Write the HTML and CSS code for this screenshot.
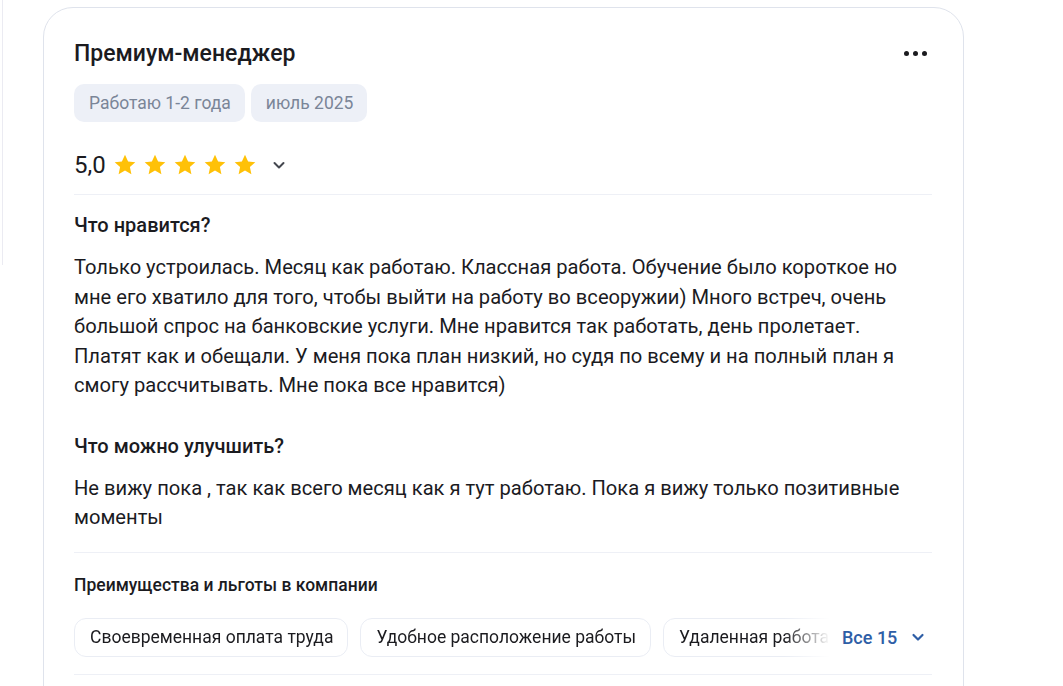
FILE: index.html
```html
<!DOCTYPE html>
<html lang="ru">
	<head>
		<meta charset="UTF-8">
		<title>Отзыв: Премиум-менеджер</title>
		<link rel="stylesheet" href="styles.css">
	</head>
	<body>
		<div class="page">
			<div class="side-strip"></div>

			<div class="review">
				<div class="review-head">
					<h2 class="review-title">Премиум-менеджер</h2>
					<button type="button" class="more" aria-label="Ещё">
						<span></span><span></span><span></span>
					</button>
				</div>

				<div class="tags">
					<span class="tag">Работаю 1-2 года</span>
					<span class="tag">июль 2025</span>
				</div>

				<div class="rating">
					<span class="rating-value">5,0</span>
					<span class="stars">
						<svg viewBox="0 0 24 24"><path d="M12 1.8l3.1 6.6 7.2.8-5.4 4.9 1.5 7.1L12 17.6l-6.4 3.6 1.5-7.1-5.4-4.9 7.2-.8z"/></svg>
						<svg viewBox="0 0 24 24"><path d="M12 1.8l3.1 6.6 7.2.8-5.4 4.9 1.5 7.1L12 17.6l-6.4 3.6 1.5-7.1-5.4-4.9 7.2-.8z"/></svg>
						<svg viewBox="0 0 24 24"><path d="M12 1.8l3.1 6.6 7.2.8-5.4 4.9 1.5 7.1L12 17.6l-6.4 3.6 1.5-7.1-5.4-4.9 7.2-.8z"/></svg>
						<svg viewBox="0 0 24 24"><path d="M12 1.8l3.1 6.6 7.2.8-5.4 4.9 1.5 7.1L12 17.6l-6.4 3.6 1.5-7.1-5.4-4.9 7.2-.8z"/></svg>
						<svg viewBox="0 0 24 24"><path d="M12 1.8l3.1 6.6 7.2.8-5.4 4.9 1.5 7.1L12 17.6l-6.4 3.6 1.5-7.1-5.4-4.9 7.2-.8z"/></svg>
					</span>
					<svg class="chevron" viewBox="0 0 16 16"><path d="M3.5 6l4.5 4.5L12.5 6"/></svg>
				</div>

				<hr class="divider">

				<h3 class="section-title">Что нравится?</h3>
				<p class="section-text">Только устроилась. Месяц как работаю. Классная работа. Обучение было короткое но мне его хватило для того, чтобы выйти на работу во всеоружии) Много встреч, очень большой спрос на банковские услуги. Мне нравится так работать, день пролетает. Платят как и обещали. У меня пока план низкий, но судя по всему и на полный план я смогу рассчитывать. Мне пока все нравится)</p>

				<h3 class="section-title second">Что можно улучшить?</h3>
				<p class="section-text">Не вижу пока , так как всего месяц как я тут работаю. Пока я вижу только позитивные моменты</p>

				<hr class="divider lower">

				<h4 class="benefits-title">Преимущества и льготы в компании</h4>
				<div class="benefits">
					<div class="chips">
						<span class="chip">Своевременная оплата труда</span>
						<span class="chip">Удобное расположение работы</span>
						<span class="chip">Удаленная работа</span>
					</div>
					<button type="button" class="show-all">
						Все 15
						<svg viewBox="0 0 16 16"><path d="M3.5 6l4.5 4.5L12.5 6"/></svg>
					</button>
				</div>

				<hr class="divider bottom">
			</div>
		</div>
	</body>
</html>
```

FILE: styles.css
```css
html, body {
	margin : 0;
	padding : 0;
	background-color : #ffffff;
	font-family : Roboto, "Noto Sans", Arial, sans-serif;
	color : #1b1b1f;
}
.page {
	display : flex;
	align-items : flex-start;
	height : 686px;
	overflow : hidden;
}
.side-strip {
	width : 2px;
	height : 265px;
	border-right : 1px solid #ebebf2;
	flex-shrink : 0;
}
.review {
	margin : 7px 0 0 40px;
	width : 858px;
	padding : 31px 31px 40px 30px;
	border : 1px solid #dfe3ec;
	border-radius : 30px;
	flex-shrink : 0;
}
.review-head {
	display : flex;
	justify-content : space-between;
	align-items : center;
	height : 30px;
}
.review-title {
	margin : 0;
	font-size : 23px;
	font-weight : 500;
	line-height : 30px;
	color : #1b1b1f;
}
.more {
	display : flex;
	gap : 4px;
	padding : 0;
	margin : -2px 5px 0 0;
	border : none;
	background : none;
	cursor : pointer;
}
.more span {
	width : 5px;
	height : 5px;
	border-radius : 50%;
	background-color : #1b1b1f;
}
.tags {
	display : flex;
	gap : 6px;
	margin-top : 15px;
}
.tag {
	display : inline-flex;
	align-items : center;
	height : 38px;
	padding : 0 14px 0 15px;
	border-radius : 10px;
	background-color : #edf0f7;
	color : #7a8597;
	font-size : 17.5px;
}
.rating {
	display : flex;
	align-items : center;
	height : 30px;
	margin-top : 28px;
}
.rating-value {
	font-size : 24px;
	line-height : 30px;
	margin-right : 7px;
}
.stars {
	display : flex;
	gap : 6px;
}
.stars svg {
	width : 24px;
	height : 24px;
	fill : #ffc107;
}
.chevron {
	width : 16px;
	height : 16px;
	margin-left : 14px;
	fill : none;
	stroke : #44474f;
	stroke-width : 2;
	stroke-linecap : round;
	stroke-linejoin : round;
}
.divider {
	height : 1px;
	margin : 14px 0 0;
	border : none;
	background-color : #eef0f6;
}
.divider.lower {
	margin-top : 19px;
}
.divider.bottom {
	margin-top : 17px;
}
.section-title {
	margin : 18px 0 0;
	font-size : 20px;
	font-weight : 500;
	line-height : 24px;
	color : #1b1b1f;
}
.section-title.second {
	margin-top : 33px;
}
.section-text {
	margin : 16px 0 0;
	font-size : 20.15px;
	line-height : 29.5px;
	color : #1b1b1f;
}
.benefits-title {
	margin : 21px 0 0;
	font-size : 17.5px;
	font-weight : 500;
	line-height : 22px;
	color : #1b1b1f;
}
.benefits {
	display : flex;
	align-items : center;
	margin-top : 22px;
}
.chips {
	display : flex;
	gap : 12px;
	width : 756px;
	overflow : hidden;
	-webkit-mask-image : linear-gradient(to right, #000 710px, transparent 756px);
	mask-image : linear-gradient(to right, #000 710px, transparent 756px);
}
.chip {
	display : inline-flex;
	align-items : center;
	flex-shrink : 0;
	height : 37px;
	padding : 0 14px 0 15px;
	border : 1px solid #eaedf4;
	border-radius : 12px;
	font-size : 17.5px;
	color : #1b1b1f;
	white-space : nowrap;
}
.show-all {
	display : flex;
	align-items : center;
	gap : 13px;
	margin-left : 12px;
	padding : 0;
	border : none;
	background : none;
	font-family : inherit;
	font-size : 18px;
	font-weight : 500;
	color : #2e5ea6;
	cursor : pointer;
}
.show-all svg {
	width : 16px;
	height : 16px;
	fill : none;
	stroke : #2e5ea6;
	stroke-width : 2.2;
	stroke-linecap : round;
	stroke-linejoin : round;
}
```
